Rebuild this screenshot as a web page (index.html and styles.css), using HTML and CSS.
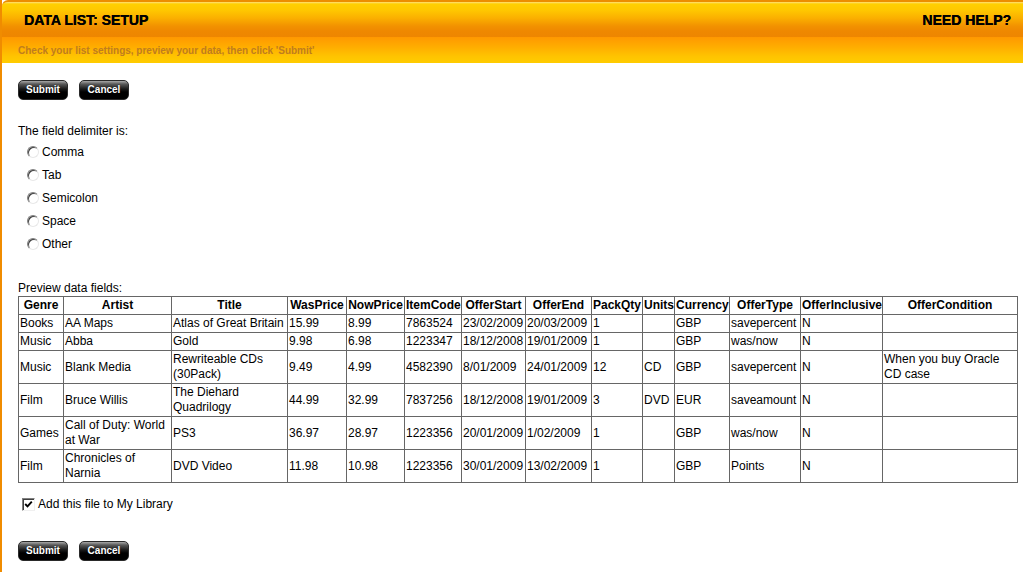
FILE: index.html
```html
<!DOCTYPE html>
<html lang="en">
<head>
<meta charset="utf-8">
<title>Data List: Setup</title>
<link rel="stylesheet" href="styles.css">
</head>
<body>
<div class="page">
  <header class="header">
    <div class="titlebar">
      <h1 class="title">DATA LIST: SETUP</h1>
      <a class="help">NEED HELP?</a>
    </div>
    <div class="subbar">Check your list settings, preview your data, then click 'Submit'</div>
  </header>
  <main class="content">
    <div class="actions">
      <button class="btn" type="button">Submit</button>
      <button class="btn" type="button">Cancel</button>
    </div>

    <p class="label">The field delimiter is:</p>
    <ul class="radios">
      <li><label class="radio-row"><input class="radio" type="radio" name="delim">Comma</label></li>
      <li><label class="radio-row"><input class="radio" type="radio" name="delim">Tab</label></li>
      <li><label class="radio-row"><input class="radio" type="radio" name="delim">Semicolon</label></li>
      <li><label class="radio-row"><input class="radio" type="radio" name="delim">Space</label></li>
      <li><label class="radio-row"><input class="radio" type="radio" name="delim">Other</label></li>
    </ul>

    <p class="label preview-label">Preview data fields:</p>
    <table class="data">
      <colgroup>
        <col class="c-genre"><col class="c-artist"><col class="c-title"><col class="c-was"><col class="c-now"><col class="c-code"><col class="c-start"><col class="c-end"><col class="c-qty"><col class="c-units"><col class="c-cur"><col class="c-type"><col class="c-incl"><col class="c-cond">
      </colgroup>
      <thead>
        <tr><th>Genre</th><th>Artist</th><th>Title</th><th>WasPrice</th><th>NowPrice</th><th>ItemCode</th><th>OfferStart</th><th>OfferEnd</th><th>PackQty</th><th>Units</th><th>Currency</th><th>OfferType</th><th>OfferInclusive</th><th>OfferCondition</th></tr>
      </thead>
      <tbody>
        <tr><td>Books</td><td>AA Maps</td><td>Atlas of Great Britain</td><td>15.99</td><td>8.99</td><td>7863524</td><td>23/02/2009</td><td>20/03/2009</td><td>1</td><td></td><td>GBP</td><td>savepercent</td><td>N</td><td></td></tr>
        <tr><td>Music</td><td>Abba</td><td>Gold</td><td>9.98</td><td>6.98</td><td>1223347</td><td>18/12/2008</td><td>19/01/2009</td><td>1</td><td></td><td>GBP</td><td>was/now</td><td>N</td><td></td></tr>
        <tr><td>Music</td><td>Blank Media</td><td>Rewriteable CDs (30Pack)</td><td>9.49</td><td>4.99</td><td>4582390</td><td>8/01/2009</td><td>24/01/2009</td><td>12</td><td>CD</td><td>GBP</td><td>savepercent</td><td>N</td><td>When you buy Oracle CD case</td></tr>
        <tr><td>Film</td><td>Bruce Willis</td><td>The Diehard Quadrilogy</td><td>44.99</td><td>32.99</td><td>7837256</td><td>18/12/2008</td><td>19/01/2009</td><td>3</td><td>DVD</td><td>EUR</td><td>saveamount</td><td>N</td><td></td></tr>
        <tr><td>Games</td><td>Call of Duty: World at War</td><td>PS3</td><td>36.97</td><td>28.97</td><td>1223356</td><td>20/01/2009</td><td>1/02/2009</td><td>1</td><td></td><td>GBP</td><td>was/now</td><td>N</td><td></td></tr>
        <tr><td>Film</td><td>Chronicles of Narnia</td><td>DVD Video</td><td>11.98</td><td>10.98</td><td>1223356</td><td>30/01/2009</td><td>13/02/2009</td><td>1</td><td></td><td>GBP</td><td>Points</td><td>N</td><td></td></tr>
      </tbody>
    </table>

    <label class="library">
      <span class="checkbox"><svg width="9" height="9" viewBox="0 0 9 9"><polyline points="1.2,4 3.5,6.4 7.8,1.6" fill="none" stroke="#000" stroke-width="1.9"/></svg></span>
      Add this file to My Library
    </label>

    <div class="actions bottom">
      <button class="btn" type="button">Submit</button>
      <button class="btn" type="button">Cancel</button>
    </div>
  </main>
</div>
</body>
</html>
```

FILE: styles.css
```css
html, body {
  margin: 0;
  padding: 0;
  background: #fff;
}

body {
  font-family: "Liberation Sans", Arial, sans-serif;
  font-size: 12px;
  color: #000;
}

.page {
  border-left: 2px solid #f08c00;
  min-height: 572px;
  box-sizing: border-box;
}

.titlebar {
  display: flex;
  justify-content: space-between;
  align-items: flex-start;
  height: 37px;
  box-sizing: border-box;
  border-top: 2px solid #ec8e00;
  border-top-left-radius: 6px;
  padding: 10px 12px 0 22px;
  background: linear-gradient(to bottom,
    #ffe07a 0px,
    #ffd000 2px,
    #ffc800 8px,
    #fbb000 16px,
    #f29200 24px,
    #ef8800 29px,
    #ee8600 35px);
}

.title,
.help {
  margin: 0;
  font-size: 14px;
  font-weight: bold;
  line-height: 16px;
  color: #000;
  text-shadow: 0.3px 0 0 #000;
}

.subbar {
  height: 26px;
  box-sizing: border-box;
  padding: 8px 0 0 16px;
  background: linear-gradient(to bottom, #ff9800 0%, #ffae00 40%, #ffc400 75%, #ffcc00 100%);
  color: #bf7d1e;
  font-size: 10px;
  font-weight: bold;
  line-height: 12px;
}

.content {
  padding: 17px 5px 0 16px;
}

.actions {
  display: flex;
  gap: 11px;
  height: 20px;
}

.btn {
  width: 50px;
  height: 20px;
  padding: 0;
  box-sizing: border-box;
  border: 1px solid #2a2a2a;
  border-radius: 5px;
  background: linear-gradient(to bottom, #a8a8a8 0px, #5a5a5a 3px, #1a1a1a 8px, #000 11px, #000 100%);
  color: #fff;
  font-family: "Liberation Sans", Arial, sans-serif;
  font-size: 10px;
  font-weight: bold;
  line-height: 18px;
  text-shadow: 0 0 1px #000;
  cursor: pointer;
}

.label {
  margin: 24px 0 0;
  line-height: 15px;
}

.radios {
  list-style: none;
  margin: 6px 0 0;
  padding: 0 0 0 9px;
}

.radios li {
  height: 15px;
  margin-bottom: 8px;
}

.radio-row {
  display: flex;
  align-items: center;
  height: 15px;
  line-height: 15px;
}

.radio {
  appearance: none;
  -webkit-appearance: none;
  width: 12px;
  height: 12px;
  margin: -2px 3px 0 0;
  box-sizing: border-box;
  border-radius: 50%;
  border: 1px solid;
  border-color: #808080 #e8e8e8 #e8e8e8 #808080;
  box-shadow: inset 1px 1px 0 #404040;
  background: #fff;
  flex: none;
}

.preview-label {
  margin-top: 29px;
}

.data {
  border-collapse: collapse;
  table-layout: fixed;
  width: 1000px;
}

.data th,
.data td {
  border: 1px solid #666;
  padding: 1px;
  line-height: 15px;
  text-align: left;
  vertical-align: middle;
  font-size: 12px;
}

.data th {
  text-align: center;
  font-weight: bold;
}

.c-genre { width: 45px; }
.c-artist { width: 108px; }
.c-title { width: 116px; }
.c-was { width: 59px; }
.c-now { width: 58px; }
.c-code { width: 57px; }
.c-start { width: 64px; }
.c-end { width: 66px; }
.c-qty { width: 51px; }
.c-units { width: 32px; }
.c-cur { width: 55px; }
.c-type { width: 71px; }
.c-incl { width: 82px; }
.c-cond { width: 135px; }

.library {
  display: flex;
  align-items: center;
  margin-top: 14px;
  padding-left: 4px;
  height: 15px;
  line-height: 15px;
}

.checkbox {
  display: flex;
  align-items: center;
  justify-content: center;
  width: 13px;
  height: 13px;
  margin-right: 3px;
  box-sizing: border-box;
  border: 1px solid;
  border-color: #808080 #f0f0f0 #f0f0f0 #808080;
  box-shadow: inset 1px 1px 0 #404040;
  background: #fff;
  flex: none;
}

.actions.bottom {
  margin-top: 29px;
}
```
